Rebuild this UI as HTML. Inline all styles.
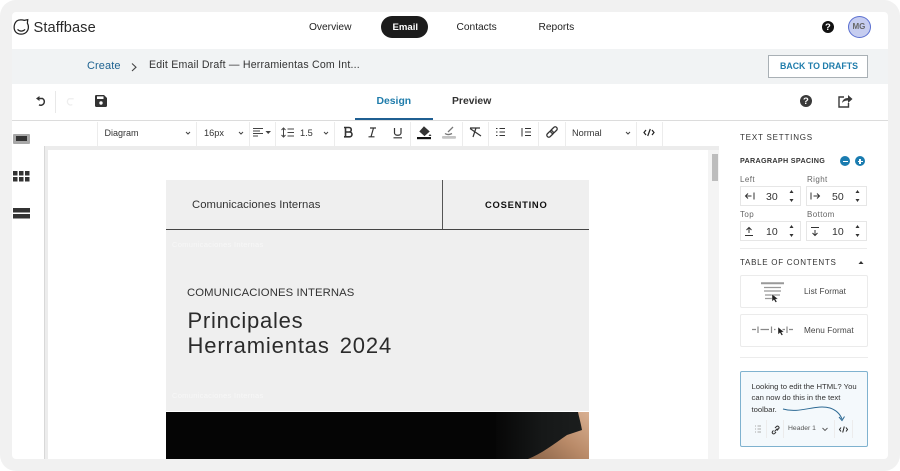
<!DOCTYPE html>
<html lang="es"><head><meta charset="utf-8"><title>Staffbase</title>
<style>
*{box-sizing:border-box}
html,body{margin:0;padding:0;width:900px;height:471px;overflow:hidden;background:#fff}
body{font-family:"Liberation Sans",sans-serif;color:#222;position:relative}
.a{position:absolute}
.t{position:absolute;white-space:nowrap;line-height:1}
svg{position:absolute;overflow:visible}
.sep{position:absolute;top:122px;width:1px;height:24px;background:#ececec}
.box{position:absolute;background:#fff;border:1px solid #e6e6e6;width:61px;height:20px}
.lbl{font-size:8px;color:#666;letter-spacing:.4px}
.num{font-size:10.5px;color:#333}
.head{font-size:8px;letter-spacing:.8px;color:#333}
.nav{font-size:10.2px;color:#222;top:22.5px}
</style></head><body>
<div class="a" style="left:0;top:0;width:900px;height:471px;background:#f1f1f1;border-radius:16px"></div>
<div class="a" style="left:12px;top:12px;width:876px;height:447px;background:#fff;border-radius:4px;overflow:hidden">
<div class="a" style="left:0;top:37px;width:876px;height:35px;background:#f1f3f4"></div>
<div class="a" style="left:0;top:108px;width:876px;height:1px;background:#dcdcdc"></div>
</div>

<!-- logo -->
<svg style="left:13px;top:18px" width="17" height="18" viewBox="0 0 18 18"><path d="M4 2.6 C6 1.2 10 1.2 12 2 L15.6 1.2 L15.2 5 C17 8 16.7 12 14 14.6 C11 17.2 6 17.2 3.2 14.6 C0.4 12 0.4 6 4 2.6Z" fill="none" stroke="#222" stroke-width="1.3"/><path d="M4.8 11.5 C7 14 10.5 14 12.8 11.5" fill="none" stroke="#222" stroke-width="1.3"/></svg>
<div class="t" style="left:33.5px;top:20.5px;font-size:14.6px;color:#2a2a2a;letter-spacing:.1px">Staffbase</div>

<!-- nav -->
<div class="t nav" style="left:309px">Overview</div>
<div class="a" style="left:381px;top:16px;width:47px;height:22px;border-radius:11px;background:#1c1c1c"></div>
<div class="t" style="left:392.5px;top:22.5px;font-size:9.6px;color:#fff;font-weight:bold">Email</div>
<div class="t nav" style="left:456.5px">Contacts</div>
<div class="t nav" style="left:538.5px">Reports</div>
<div class="a" style="left:822px;top:21px;width:12px;height:12px;border-radius:50%;background:#111"></div>
<div class="t" style="left:825px;top:22.5px;font-size:9.5px;color:#fff;font-weight:bold">?</div>
<div class="a" style="left:848px;top:16px;width:23px;height:22px;border-radius:50%;background:#c6cdf0;border:1px solid #5a6fd0"></div>
<div class="t" style="left:852.5px;top:23px;font-size:8px;color:#666;font-weight:bold">MG</div>

<!-- breadcrumb -->
<div class="t" style="left:87px;top:60.5px;font-size:11px;color:#1f6391;letter-spacing:.1px">Create</div>
<svg style="left:130px;top:62px" width="8" height="10" viewBox="0 0 8 10"><path d="M2 1.5 L6 5.2 L2 9" fill="none" stroke="#444" stroke-width="1.1"/></svg>
<div class="t" style="left:149px;top:60px;font-size:10.6px;color:#333;letter-spacing:.2px">Edit Email Draft — Herramientas Com Int...</div>
<div class="a" style="left:768px;top:55px;width:100px;height:23px;background:#fff;border:1px solid #a9b0b5"></div>
<div class="t" style="left:780px;top:62px;font-size:8.8px;color:#1f7cab;font-weight:bold">BACK TO DRAFTS</div>

<!-- toolbar 1 -->
<svg style="left:35px;top:95px" width="13" height="13" viewBox="0 0 13 13"><path d="M2.5 3.5 H7.5 A3.5 3.5 0 1 1 4 9.8" fill="none" stroke="#333" stroke-width="1.5"/><path d="M1 3.5 L4.5 1 V6Z" fill="#333"/></svg>
<div class="a" style="left:55px;top:91px;width:1px;height:22px;background:#e8e8e8"></div>
<svg style="left:64px;top:95px" width="12" height="13" viewBox="0 0 13 13"><path d="M10.5 3.5 H5.5 A3.5 3.5 0 1 0 9 9.8" fill="none" stroke="#eee" stroke-width="1.4"/></svg>
<svg style="left:95px;top:95px" width="12" height="12" viewBox="0 0 12 12"><path d="M0 1.2 Q0 0 1.2 0 H9 L12 3 V10.8 Q12 12 10.8 12 H1.2 Q0 12 0 10.8Z" fill="#333"/><rect x="2" y="1.4" width="6.5" height="2.6" fill="#fff"/><circle cx="6" cy="8" r="1.7" fill="#fff"/></svg>
<div class="t" style="left:376.5px;top:97px;font-size:10.4px;color:#1f7cab;font-weight:bold">Design</div>
<div class="a" style="left:355px;top:118px;width:78px;height:2px;background:#1f5f92"></div>
<div class="t" style="left:452px;top:97px;font-size:10.4px;color:#333;font-weight:bold">Preview</div>
<div class="a" style="left:800px;top:95px;width:12px;height:12px;border-radius:50%;background:#3a3a3a"></div>
<div class="t" style="left:803px;top:96.5px;font-size:9.5px;color:#fff;font-weight:bold">?</div>
<svg style="left:838px;top:94px" width="15" height="14" viewBox="0 0 15 14"><path d="M6 3 H1 V13 H10.5 V9" fill="none" stroke="#3a3a3a" stroke-width="1.4"/><path d="M4 9 C4.5 5.5 7 4 10 4 V1 L14.5 5 L10 9 V6.5 C8 6.5 5.5 7 4 9Z" fill="#3a3a3a"/></svg>

<!-- format toolbar -->
<div class="sep" style="left:97px"></div><div class="sep" style="left:196px"></div><div class="sep" style="left:249px"></div><div class="sep" style="left:275px"></div><div class="sep" style="left:334px"></div><div class="sep" style="left:410px"></div><div class="sep" style="left:462px"></div><div class="sep" style="left:488px"></div><div class="sep" style="left:538px"></div><div class="sep" style="left:565px"></div><div class="sep" style="left:636px"></div><div class="sep" style="left:662px"></div>
<div class="t" style="left:104.5px;top:129px;font-size:9px;color:#333">Diagram</div>
<div class="t" style="left:204px;top:129px;font-size:9.2px;color:#333">16px</div>
<div class="t" style="left:300px;top:129px;font-size:9.2px;color:#333">1.5</div>
<div class="t" style="left:572px;top:129px;font-size:9.2px;color:#333">Normal</div>
<svg style="left:0;top:0" width="900" height="160" viewBox="0 0 900 160" fill="none" stroke="#444" stroke-width="1">
<path d="M186 132 L188 134 L190 132M239 132 L241 134 L243 132M324 132 L326 134 L328 132M626 132 L628 134 L630 132"/>
<path d="M253 128.500 H263M253 131 H260M253 133.500 H263M253 136 H258"/>
<path d="M265.500 131 H271 L268.200 134Z" fill="#444" stroke="none"/>
<path d="M283.500 128 V137M281.500 130 L283.500 128 L285.500 130M281.500 135 L283.500 137 L285.500 135M287.500 129 H294M287.500 132.500 H294M287.500 136 H294"/>
<path d="M344 127.500 H349 C352 127.500 352 132 349 132 H345.500M345.500 132 H349.500 C352.800 132 352.800 136.800 349.500 136.800 H344M345.500 127.500 V136.800" stroke="#333" stroke-width="1.600"/>
<path d="M370 128 H376M368.500 136.800 H374.500M373.500 128 L371 136.800" stroke="#333" stroke-width="1.200"/>
<path d="M394.500 128 V133 C394.500 136 401 136 401 133 V128M393.500 137.800 H402" stroke="#333" stroke-width="1.200"/>
<path d="M424 127 L429 131.500 L424.500 135.500 L420 131.500Z" fill="#333" stroke="#333"/>
<path d="M430 134 L431.500 136 H428.500Z" fill="#333" stroke="none"/>
<rect x="417" y="137" width="14" height="2.200" fill="#111" stroke="none"/>
<path d="M453 127 L448 132 M445 133.500 C447 135 450 134.500 452 133.500" stroke="#777" stroke-width="1.300"/>
<rect x="442" y="136" width="14" height="2.800" rx="1" fill="#c4c4c4" stroke="none"/>
<path d="M470 128 H480M476 128 L473 137 M470 128.500 L481 136" stroke="#333" stroke-width="1.200"/>
<path d="M496 128.500 H497.500M496 132 H497.500M496 135.500 H497.500M499.500 128.500 H505M499.500 132 H505M499.500 135.500 H505" stroke="#333"/>
<path d="M522 128 V136.500M525 128.500 H531M525 132 H531M525 135.500 H531" stroke="#333"/>
<g transform="rotate(-45 552 132)" stroke="#333" stroke-width="1.300"><rect x="545.500" y="130" width="7.500" height="4" rx="2"/><rect x="551" y="130" width="7.500" height="4" rx="2"/></g>
<path d="M646 130 L644 132.500 L646 135M652 130 L654 132.500 L652 135M650.300 129 L647.700 136" stroke="#222" stroke-width="1.200"/>
</svg>

<!-- left rail -->
<div class="a" style="left:13px;top:134px;width:17px;height:10px;background:#a8a8a8;border-radius:1px"></div>
<div class="a" style="left:16px;top:136px;width:11px;height:5px;background:#333"></div>
<svg style="left:13px;top:170px" width="17" height="13" viewBox="0 0 17 13" fill="#333"><rect x="0" y="1" width="4.500" height="4.500"/><rect x="6" y="1" width="4.500" height="4.500"/><rect x="12" y="1" width="4.500" height="4.500"/><rect x="0" y="7" width="4.500" height="4.500"/><rect x="6" y="7" width="4.500" height="4.500"/><rect x="12" y="7" width="4.500" height="4.500"/></svg>
<svg style="left:13px;top:208px" width="17" height="11" viewBox="0 0 17 11" fill="#333"><rect y="0" width="17" height="4.500"/><rect y="6" width="17" height="4.500"/></svg>

<!-- editor frame -->
<div class="a" style="left:44px;top:146px;width:675px;height:313px;background:#ececec;border-left:1px solid #d8d8d8"></div>
<div class="a" style="left:48px;top:150px;width:660px;height:309px;background:#fff"></div>
<div class="a" style="left:708px;top:150px;width:11px;height:309px;background:#f4f4f4"></div>
<div class="a" style="left:712px;top:154px;width:6px;height:27px;background:#bdbdbd"></div>

<!-- doc -->
<div class="a" style="left:166px;top:180px;width:423px;height:231px;background:#efefef"></div>
<div class="a" style="left:166px;top:229px;width:423px;height:1px;background:#444"></div>
<div class="a" style="left:441.500px;top:180px;width:1px;height:49px;background:#555"></div>
<div class="t" style="left:192px;top:199.500px;font-size:11.300px;color:#333;letter-spacing:.04px">Comunicaciones Internas</div>
<div class="t" style="left:485px;top:199.500px;font-size:9.400px;color:#111;font-weight:bold;letter-spacing:.75px">COSENTINO</div>
<div class="t" style="left:172px;top:240.500px;font-size:7.500px;color:#f7f7f7;letter-spacing:.3px">Comunicaciones Internas</div>
<div class="t" style="left:187px;top:288px;font-size:11.300px;color:#333;letter-spacing:.1px">COMUNICACIONES INTERNAS</div>
<div class="t" style="left:187.500px;top:310px;font-size:22px;color:#2b2b2b;letter-spacing:.75px">Principales</div>
<div class="t" style="left:187.500px;top:335px;font-size:22px;color:#2b2b2b;letter-spacing:.85px;word-spacing:3px">Herramientas 2024</div>
<div class="t" style="left:172px;top:392px;font-size:7.500px;color:#f7f7f7;letter-spacing:.3px">Comunicaciones Internas</div>
<div class="a" style="left:166px;top:412px;width:423px;height:47px;background:#050505;overflow:hidden">
<div class="a" style="left:330px;top:0;width:93px;height:47px;background:linear-gradient(90deg,#070707,#161818 50%,#1c1e1e)"></div>
<svg style="left:0;top:0" width="423" height="47" viewBox="0 0 423 47"><defs><linearGradient id="sk" x1="0" y1="1" x2="1" y2="0"><stop offset="0" stop-color="#8a6448"/><stop offset=".5" stop-color="#b98a68"/><stop offset="1" stop-color="#d9b092"/></linearGradient></defs><path d="M412 0 H423 V47 H362 C375 42 388 32 401 23 L416 18 C415 12 413 5 412 0Z" fill="url(#sk)"/></svg>
</div>

<!-- right panel -->
<div class="t head" style="left:740px;top:133.500px">TEXT SETTINGS</div>
<div class="t" style="left:740px;top:157px;font-size:7.200px;color:#333;font-weight:bold;letter-spacing:.3px">PARAGRAPH SPACING</div>
<div class="a" style="left:840px;top:156px;width:10px;height:10px;border-radius:50%;background:#1a7cb0"></div>
<div class="a" style="left:842.500px;top:160.500px;width:5px;height:1.200px;background:#fff"></div>
<div class="a" style="left:855px;top:156px;width:10px;height:10px;border-radius:50%;background:#1a7cb0"></div>
<div class="a" style="left:857.500px;top:160.500px;width:5px;height:1.200px;background:#fff"></div>
<div class="a" style="left:859.400px;top:158.500px;width:1.200px;height:5px;background:#fff"></div>

<div class="t lbl" style="left:740px;top:175.500px">Left</div>
<div class="t lbl" style="left:807px;top:175.500px">Right</div>
<div class="box" style="left:740px;top:186px"></div>
<div class="box" style="left:806px;top:186px"></div>
<div class="t num" style="left:766px;top:191.500px">30</div>
<div class="t num" style="left:832px;top:191.500px">50</div>
<div class="t lbl" style="left:740px;top:210.500px">Top</div>
<div class="t lbl" style="left:807px;top:210.500px">Bottom</div>
<div class="box" style="left:740px;top:221px"></div>
<div class="box" style="left:806px;top:221px"></div>
<div class="t num" style="left:766px;top:226.500px">10</div>
<div class="t num" style="left:832px;top:226.500px">10</div>
<svg style="left:0;top:0" width="900" height="260" viewBox="0 0 900 260" fill="none" stroke="#333" stroke-width="1">
<path d="M745.500 196 H751.500M748 193.500 L745.500 196 L748 198.500M754 192.500 V199.500"/>
<path d="M811 192.500 V199.500M813.500 196 H819.500M817 193.500 L819.500 196 L817 198.500"/>
<path d="M745 235.500 H753M749 233 V227.500M746.500 230 L749 227.500 L751.500 230"/>
<path d="M811 227.500 H819M815 230 V235.500M812.500 233 L815 235.500 L817.500 233"/>
<g fill="#333" stroke="none">
<path d="M789.500 193 L791.500 190 L793.500 193ZM789.500 199 L791.500 202 L793.500 199ZM855.500 193 L857.500 190 L859.500 193ZM855.500 199 L857.500 202 L859.500 199ZM789.500 228 L791.500 225 L793.500 228ZM789.500 234 L791.500 237 L793.500 234ZM855.500 228 L857.500 225 L859.500 228ZM855.500 234 L857.500 237 L859.500 234Z"/>
</g>
</svg>
<div class="a" style="left:740px;top:248px;width:127px;height:1px;background:#ececec"></div>
<div class="t head" style="left:740px;top:259px;letter-spacing:.72px">TABLE OF CONTENTS</div>
<svg style="left:857px;top:260px" width="8" height="5" viewBox="0 0 8 5"><path d="M1.500 4 L4 1 L6.500 4Z" fill="#333"/></svg>
<div class="a" style="left:740px;top:275px;width:128px;height:33px;border:1px solid #ebebeb;border-radius:2px;background:#fff"></div>
<div class="a" style="left:740px;top:314px;width:128px;height:33px;border:1px solid #ebebeb;border-radius:2px;background:#fff"></div>
<svg style="left:0;top:0" width="900" height="360" viewBox="0 0 900 360" fill="none" stroke="#999">
<path d="M761 283.200 H784" stroke-width="2"/>
<path d="M764 287.500 H781M764 291 H781M765 295 H780M765 298.500 H773" stroke-width="1.200"/>
<path d="M752 329.500 H756M758 326.500 V333M760.500 329.500 H769M771.500 326.500 V333M774 329.500 H775.500M782.500 329.500 H785M787 326.500 V333M789 329.500 H793" stroke-width="1.200" stroke="#888"/>
<path d="M772 294 V301.500 L774 299.800 L775.500 302.500 L777 301.800 L775.500 299.200 L778 299Z" fill="#222" stroke="#fff" stroke-width=".4"/>
<path d="M778 327 V334.500 L780 332.800 L781.500 335.500 L783 334.800 L781.500 332.200 L784 332Z" fill="#222" stroke="#fff" stroke-width=".4"/>
</svg>
<div class="t" style="left:804px;top:287.500px;font-size:8.200px;color:#444;letter-spacing:.1px">List Format</div>
<div class="t" style="left:804px;top:326.500px;font-size:8.200px;color:#444;letter-spacing:.1px">Menu Format</div>
<div class="a" style="left:740px;top:357px;width:128px;height:1px;background:#ececec"></div>

<!-- tip -->
<div class="a" style="left:740px;top:371px;width:128px;height:76px;background:#f4f9fc;border:1px solid #7fb2cf;border-radius:2px"></div>
<div class="t" style="left:751.500px;top:381px;font-size:7.700px;color:#333;line-height:11.300px">Looking to edit the HTML? You<br>can now do this in the text<br>toolbar.</div>
<svg style="left:0;top:0" width="900" height="471" viewBox="0 0 900 471" fill="none">
<path d="M783 409 C800 414 815 404 830 408 C836 410 840 414 842 419" stroke="#2d6a94" stroke-width="1"/>
<path d="M839 417 L842 420.500 L844.500 416.500" stroke="#2d6a94" stroke-width="1"/>
<path d="M755 426 H756M755 429 H756M755 432 H756M757.500 426 H761M757.500 429 H761M757.500 432 H761" stroke="#aaa" stroke-width=".9"/>
<path d="M773.500 430.500 L772.500 431.500 A1.500 1.500 0 0 0 774.700 433.500 L776 432 M775 428 L776.500 426.500 A1.500 1.500 0 0 1 778.500 428.800 L777 430.500 M774.500 431.500 L777.500 428.500" stroke="#333" stroke-width="1"/>
<path d="M822.500 428 L825 430.500 L827.500 428" stroke="#555" stroke-width=".9"/>
<path d="M841 427.500 L839.500 429.500 L841 431.500M846 427.500 L847.500 429.500 L846 431.500M844.300 426.500 L842.700 432.500" stroke="#222" stroke-width="1"/>
</svg>
<div class="a" style="left:766px;top:420px;width:1px;height:18px;background:#ececec"></div>
<div class="a" style="left:783px;top:420px;width:1px;height:18px;background:#ececec"></div>
<div class="a" style="left:834px;top:420px;width:1px;height:18px;background:#ececec"></div>
<div class="a" style="left:852px;top:420px;width:1px;height:18px;background:#ececec"></div>
<div class="t" style="left:788px;top:426px;font-size:6.800px;color:#555">Header 1</div>
</body></html>
